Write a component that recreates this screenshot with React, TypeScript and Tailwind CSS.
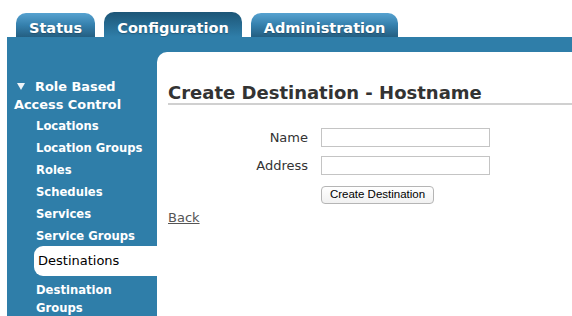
import React from 'react';

const tabs = [
  { label: 'Status', active: false, width: 'w-[79px]' },
  { label: 'Configuration', active: true, width: 'w-[138px]' },
  { label: 'Administration', active: false, width: 'w-[147px]' },
];

const sideItems = [
  'Locations',
  'Location Groups',
  'Roles',
  'Schedules',
  'Services',
  'Service Groups',
];

export default function App() {
  return (
    <div className="w-[572px] h-[316px] overflow-hidden bg-white font-['DejaVu_Sans',Verdana,sans-serif] flex flex-col">
      {/* tabs */}
      <div className="flex items-end h-[37px] pl-[16px] shrink-0">
        {tabs.map((t, i) => (
          <div
            key={t.label}
            className={`${t.width} ${i > 0 ? 'ml-[9px]' : ''} ${
              t.active
                ? 'h-[25px] bg-gradient-to-b from-[#1d5677] to-[#2f7ea9] pt-[8px]'
                : 'h-[24px] bg-gradient-to-b from-[#56a2d0] via-[#3580ad] to-[#245f82] pt-[7px]'
            } rounded-t-[10px] flex items-center justify-center text-white font-bold text-[14.5px] leading-none [text-shadow:0_1px_1px_rgba(0,0,0,0.25)]`}
          >
            {t.label}
          </div>
        ))}
      </div>

      {/* main area */}
      <div className="ml-[7px] flex-1 bg-[#2f7ea9] pt-[15px] flex">
        <div className="w-[150px] shrink-0 pt-[26px] text-white font-bold text-[11.6px]">
          <div className="pl-[7px] leading-[18px] text-[12.9px]">
            <svg width="8" height="7" viewBox="0 0 8 7" className="inline-block ml-[3px] mr-[10px] align-[1px]">
              <path d="M0 0 H8 L4 7 Z" fill="#eef4f8" />
            </svg>
            Role Based Access Control
          </div>
          <div className="mt-[1px]">
            {sideItems.map((s) => (
              <div key={s} className="pl-[29px] h-[22px] leading-[22px] whitespace-nowrap">
                {s}
              </div>
            ))}
            <div className="ml-[27px] mt-[-1px] h-[30px] bg-white rounded-l-[9px] pl-[4px] leading-[30px] text-black font-normal text-[13px]">
              Destinations
            </div>
            <div className="pl-[29px] pt-[5px] leading-[18px]">
              Destination
              <br />
              Groups
            </div>
          </div>
        </div>

        <div className="flex-1 bg-white rounded-tl-[10px] pt-[31px]">
          <div className="ml-[11px] border-b-2 border-[#d0d0d0]">
            <h1 className="text-[18px] font-bold text-[#333333] leading-[20px]">
              Create Destination - Hostname
            </h1>
          </div>

          <div className="mt-[23px] text-[13px] text-[#333333]">
            <div className="flex items-center h-[19px]">
              <div className="w-[151px] text-right">Name</div>
              <input className="ml-[13px] w-[169px] h-[19px] border border-[#c4c4c4] outline-none" />
            </div>
            <div className="flex items-center h-[19px] mt-[9px]">
              <div className="w-[151px] text-right">Address</div>
              <input className="ml-[13px] w-[169px] h-[19px] border border-[#c4c4c4] outline-none" />
            </div>
            <div className="mt-[9px] pl-[164px]">
              <button className="w-[113px] h-[18px] border border-[#b5b5b5] rounded-[4px] bg-gradient-to-b from-white to-[#f1f1f1] text-[11.5px] font-['Liberation_Sans',Arial,sans-serif] text-black leading-none">
                Create Destination
              </button>
            </div>
          </div>

          <div className="mt-[5px] ml-[11px] text-[13px] leading-[18px]">
            <a href="#" className="text-[#555555] underline">
              Back
            </a>
          </div>
        </div>
      </div>
    </div>
  );
}
